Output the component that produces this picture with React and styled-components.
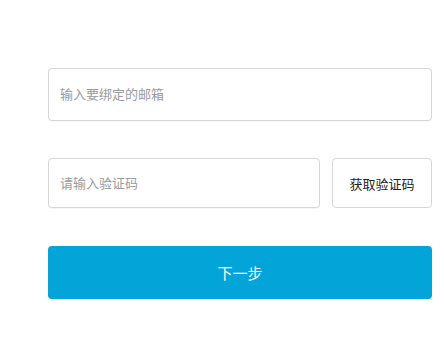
import React, { useState } from "react";
import styled, { createGlobalStyle } from "styled-components";

const GlobalStyle = createGlobalStyle`
  html, body {
    margin: 0;
    padding: 0;
    background: #fff;
    font-family: "Liberation Sans", "Noto Sans CJK SC", sans-serif;
  }
`;

const Page = styled.div`
  width: 444px;
  height: 362px;
  box-sizing: border-box;
  padding: 68px 12px 0 48px;
`;

const Form = styled.form`
  display: flex;
  flex-direction: column;
`;

const Row = styled.div`
  display: flex;
  gap: 12px;
  margin-bottom: ${(p) => p.gap || 0}px;
`;

const Input = styled.input`
  flex: 1;
  min-width: 0;
  height: ${(p) => p.h}px;
  box-sizing: border-box;
  border: 1px solid #d6d6d6;
  border-radius: 4px;
  padding: 0 11px;
  font-size: 13px;
  font-family: inherit;
  color: #333;
  outline: none;
  box-shadow: 0 1px 1px rgba(0, 0, 0, 0.04);
  &::placeholder {
    color: #9a9a9a;
  }
`;

const CodeButton = styled.button`
  width: 100px;
  height: 50px;
  box-sizing: border-box;
  border: 1px solid #d6d6d6;
  border-radius: 4px;
  background: #fff;
  color: #222;
  font-size: 13px;
  font-family: inherit;
  cursor: pointer;
  padding: 0;
`;

const Submit = styled.button`
  height: 53px;
  border: none;
  border-radius: 4px;
  background: #03a4d8;
  color: #fff;
  font-size: 15px;
  font-family: inherit;
  cursor: pointer;
`;

const App = () => {
  const [email, setEmail] = useState("");
  const [code, setCode] = useState("");

  return (
    <Page>
      <GlobalStyle />
      <Form onSubmit={(e) => e.preventDefault()}>
        <Row gap={37}>
          <Input
            h={53}
            placeholder="输入要绑定的邮箱"
            value={email}
            onChange={(e) => setEmail(e.target.value)}
          />
        </Row>
        <Row gap={38}>
          <Input
            h={50}
            placeholder="请输入验证码"
            value={code}
            onChange={(e) => setCode(e.target.value)}
          />
          <CodeButton type="button">获取验证码</CodeButton>
        </Row>
        <Submit type="submit">下一步</Submit>
      </Form>
    </Page>
  );
};

export default App;
